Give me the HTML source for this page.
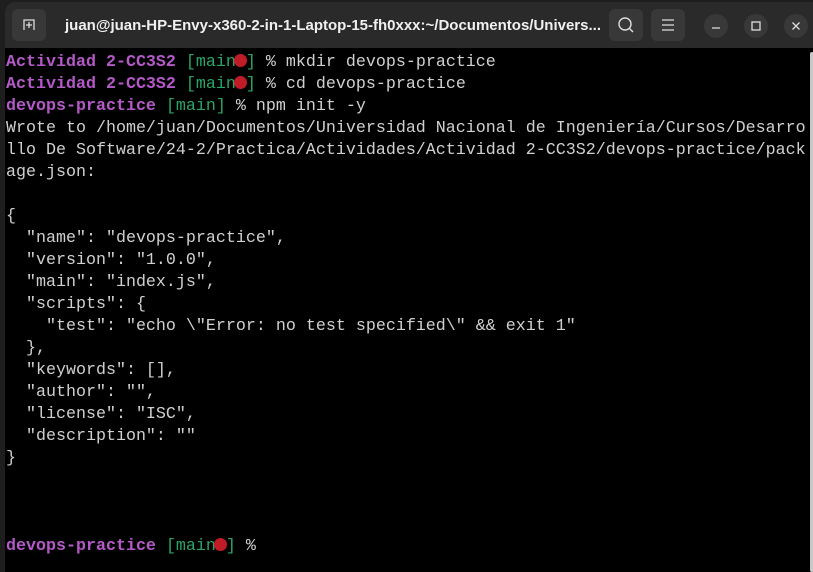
<!DOCTYPE html>
<html><head><meta charset="utf-8"><style>
html,body{margin:0;padding:0;width:813px;height:563px;overflow:hidden;background:#1e1e1e;}
#win{position:absolute;left:5px;top:2px;width:820px;height:570px;background:#000;border-radius:10px 10px 0 0;overflow:hidden;}
#tb{position:absolute;left:0;top:0;width:100%;height:46px;background:#2a2a2a;}
.btn{position:absolute;top:7px;width:34px;height:32px;background:#383838;border-radius:6px;}
.cb{position:absolute;top:12px;width:24px;height:24px;background:#383838;border-radius:50%;}
#title{position:absolute;left:60px;top:15px;color:#f0f0f0;font:bold 15px "Liberation Sans",sans-serif;white-space:nowrap;}
#term{position:absolute;left:1px;top:50px;font-family:"Liberation Mono",monospace;font-size:16.67px;line-height:22px;color:#d0d0d0;white-space:pre;}
.p{color:#b559c9;font-weight:bold;}.g{color:#2aa568;}.d{display:inline-block;width:13px;height:13px;border-radius:50%;background:#c01c28;vertical-align:-1px;margin:0 -1px 0 -2px;}
#sb{position:absolute;left:810px;top:52px;width:4px;height:520px;background:#c8c8c8;border-radius:2px;}
</style></head><body>
<div id="win">
<div id="tb">
<div class="btn" style="left:7px;"><svg width="34" height="32"><path d="M12 21V11h10v10M14 16h6M17 13v6" stroke="#ddd" stroke-width="1.3" fill="none"/></svg></div>
<div id="title">juan@juan-HP-Envy-x360-2-in-1-Laptop-15-fh0xxx:~/Documentos/Univers...</div>
<div class="btn" style="left:604px;"><svg width="34" height="32"><circle cx="16" cy="15" r="6" stroke="#ddd" stroke-width="1.4" fill="none"/><path d="M20 19l4 4" stroke="#ddd" stroke-width="1.4"/></svg></div>
<div class="btn" style="left:646px;"><svg width="34" height="32"><path d="M11 11h12M11 16h12M11 21h12" stroke="#ddd" stroke-width="1.3"/></svg></div>
<div class="cb" style="left:699px;"><svg width="24" height="24"><path d="M8 14h8" stroke="#ddd" stroke-width="1.3"/></svg></div>
<div class="cb" style="left:739px;"><svg width="24" height="24"><rect x="8" y="8" width="8" height="8" stroke="#ddd" stroke-width="1.3" fill="none"/></svg></div>
<div class="cb" style="left:779px;"><svg width="24" height="24"><path d="M8.5 8.5l7 7M15.5 8.5l-7 7" stroke="#ddd" stroke-width="1.3"/></svg></div>
</div>
<div id="term"><span class="p">Actividad 2-CC3S2</span> <span class="g">[main<span class="d"></span>]</span> % mkdir devops-practice
<span class="p">Actividad 2-CC3S2</span> <span class="g">[main<span class="d"></span>]</span> % cd devops-practice
<span class="p">devops-practice</span> <span class="g">[main]</span> % npm init -y
Wrote to /home/juan/Documentos/Universidad Nacional de Ingeniería/Cursos/Desarro
llo De Software/24-2/Practica/Actividades/Actividad 2-CC3S2/devops-practice/pack
age.json:

{
  "name": "devops-practice",
  "version": "1.0.0",
  "main": "index.js",
  "scripts": {
    "test": "echo \"Error: no test specified\" &amp;&amp; exit 1"
  },
  "keywords": [],
  "author": "",
  "license": "ISC",
  "description": ""
}



<span class="p">devops-practice</span> <span class="g">[main<span class="d"></span>]</span> %</div>
</div>
<div id="sb"></div>
</body></html>
